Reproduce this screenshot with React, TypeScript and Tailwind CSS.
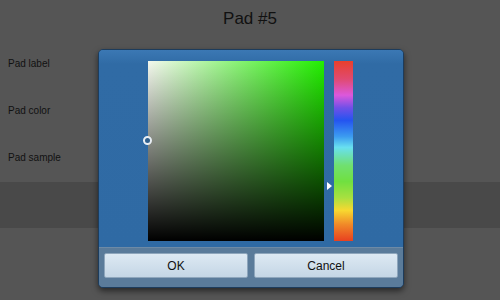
export default function App() {
  return (
    <div className="relative w-[500px] h-[300px] overflow-hidden bg-[#555555] font-['Liberation_Sans',Arial,sans-serif] text-[#111111]">
      {/* settings page behind the dialog */}
      <div className="flex flex-col">
        <div className="h-[38px] pt-[9px] text-center text-[17px] leading-[20px]">Pad #5</div>
        <div className="flex flex-col pl-[8px] text-[10px] leading-[12px]">
          <div className="h-[47px] pt-[20px]">Pad label</div>
          <div className="h-[47px] pt-[20px]">Pad color</div>
          <div className="h-[46px] pt-[20px]">Pad sample</div>
        </div>
        <div className="mt-[4px] h-[46px] bg-[#494949]" />
      </div>

      {/* color picker dialog */}
      <div className="absolute left-[98px] top-[49px] w-[306px] h-[239px] rounded-[5px] border border-[#1d3c5c] bg-[#2f6aa4] shadow-[0_3px_6px_rgba(0,0,0,0.55)] overflow-hidden flex flex-col">
        <div className="flex-1 flex gap-[10px] pl-[49px] pt-[11px] bg-[linear-gradient(to_bottom,#3b78b4_0px,#306ba5_14px,#2f6aa4_100%)]">
          <div className="relative w-[176px] h-[180px] bg-[linear-gradient(to_right,#f4f8ee,#22ee00)]">
            <div className="absolute inset-0 bg-[linear-gradient(to_bottom,rgba(0,0,0,0)_0%,rgba(0,0,0,0.55)_55%,#000_100%)]" />
            <div className="absolute left-[-5px] top-[75px] w-[9px] h-[9px] rounded-full border-2 border-[#e8eef4] bg-[#2f5f8c]" />
            <div className="absolute right-[-8px] top-[121px] w-0 h-0 border-y-[4px] border-y-transparent border-l-[5px] border-l-white" />
          </div>
          <div className="w-[19px] h-[180px] bg-[linear-gradient(to_bottom,#e8402c_0%,#e04a70_10%,#dc58dc_19%,#7050e8_26%,#2454f0_33%,#3c9cf0_42%,#68e0f0_48%,#70e070_58%,#70e040_67%,#a8e040_76%,#f8d830_83%,#f08828_91%,#e84020_100%)]" />
        </div>
        <div className="h-[40px] shrink-0 flex gap-[6px] px-[5px] pt-[5px] pb-[9px] bg-[#5a7b9a] border-t border-[#6d8aa6]">
          <button
            type="button"
            className="flex-1 rounded-[2px] border border-[#8ea6bc] bg-[linear-gradient(to_bottom,#dde9f3,#c4d6e5)] text-[12px] text-[#111111]"
          >
            OK
          </button>
          <button
            type="button"
            className="flex-1 rounded-[2px] border border-[#8ea6bc] bg-[linear-gradient(to_bottom,#dde9f3,#c4d6e5)] text-[12px] text-[#111111]"
          >
            Cancel
          </button>
        </div>
      </div>
    </div>
  );
}
